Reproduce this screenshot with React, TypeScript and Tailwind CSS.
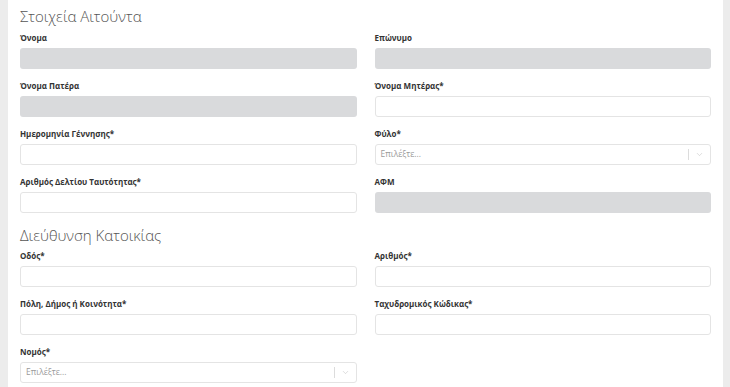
import { ChevronDown } from "lucide-react";

type FieldProps = {
  label: string;
  kind?: "text" | "disabled" | "select";
};

function Field({ label, kind = "text" }: FieldProps) {
  return (
    <div className="flex flex-col">
      <label className="mb-1 text-[8px] font-bold leading-[12px] text-[#333]">
        {label}
      </label>
      {kind === "select" ? (
        <div className="flex h-[21px] items-center rounded-[3px] border border-[#e4e4e4] bg-white">
          <span className="flex-1 pl-[5px] text-[8.5px] text-[#9a9a9a]">
            Επιλέξτε...
          </span>
          <span className="h-[11px] w-px bg-[#dcdcdc]" />
          <span className="flex w-[21px] items-center justify-center text-[#c4c4c4]">
            <ChevronDown size={9} strokeWidth={1.5} />
          </span>
        </div>
      ) : (
        <div
          className={
            kind === "disabled"
              ? "h-[21px] rounded-[3px] bg-[#d9dadc]"
              : "h-[21px] rounded-[3px] border border-[#e4e4e4] bg-white"
          }
        />
      )}
    </div>
  );
}

export default function App() {
  return (
    <div
      className="h-[387px] overflow-hidden bg-[#ececec] pl-2 pr-[7px]"
      style={{ fontFamily: '"Open Sans", "Noto Sans", sans-serif' }}
    >
      <div className="h-full bg-white px-3 pt-[6px]">
        <h2 className="mb-[6px] text-[15px] font-light leading-[20px] text-[#555]">
          Στοιχεία Αιτούντα
        </h2>
        <div className="grid grid-cols-2 gap-x-[18px] gap-y-[11px]">
          <Field label="Όνομα" kind="disabled" />
          <Field label="Επώνυμο" kind="disabled" />
          <Field label="Όνομα Πατέρα" kind="disabled" />
          <Field label="Όνομα Μητέρας*" />
          <Field label="Ημερομηνία Γέννησης*" />
          <Field label="Φύλο*" kind="select" />
          <Field label="Αριθμός Δελτίου Ταυτότητας*" />
          <Field label="ΑΦΜ" kind="disabled" />
        </div>
        <h2 className="mb-[5px] mt-3 text-[15px] font-light leading-[20px] text-[#555]">
          Διεύθυνση Κατοικίας
        </h2>
        <div className="grid grid-cols-2 gap-x-[18px] gap-y-[11px]">
          <Field label="Οδός*" />
          <Field label="Αριθμός*" />
          <Field label="Πόλη, Δήμος ή Κοινότητα*" />
          <Field label="Ταχυδρομικός Κώδικας*" />
          <Field label="Νομός*" kind="select" />
        </div>
      </div>
    </div>
  );
}
